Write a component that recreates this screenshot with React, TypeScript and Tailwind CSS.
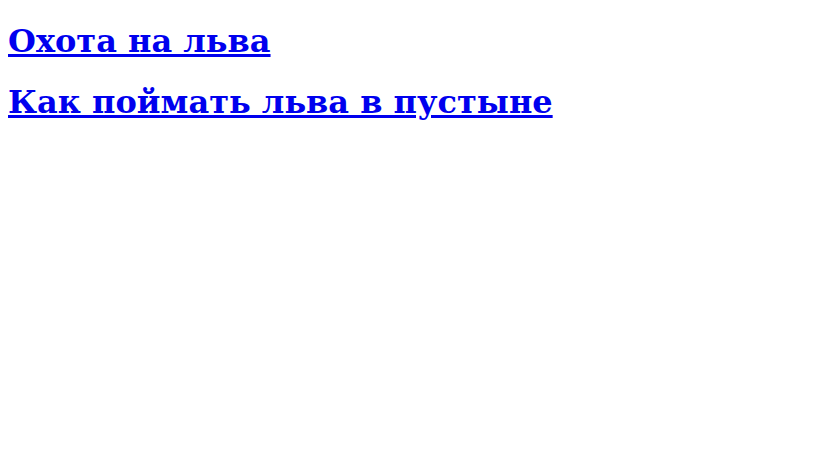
import React from 'react';

const links = [
  { title: 'Охота на льва', href: '#hunt' },
  { title: 'Как поймать льва в пустыне', href: '#desert' },
];

const App: React.FC = () => {
  return (
    <div className="min-h-screen bg-white px-2 pt-[23px] font-['DejaVu_Serif',serif]">
      <div className="flex flex-col items-start gap-[24px]">
        {links.map((link) => (
          <h1 key={link.href} className="text-[32px] font-bold leading-[37px]">
            <a href={link.href} className="text-[#0000ee] underline">
              {link.title}
            </a>
          </h1>
        ))}
      </div>
    </div>
  );
};

export default App;
